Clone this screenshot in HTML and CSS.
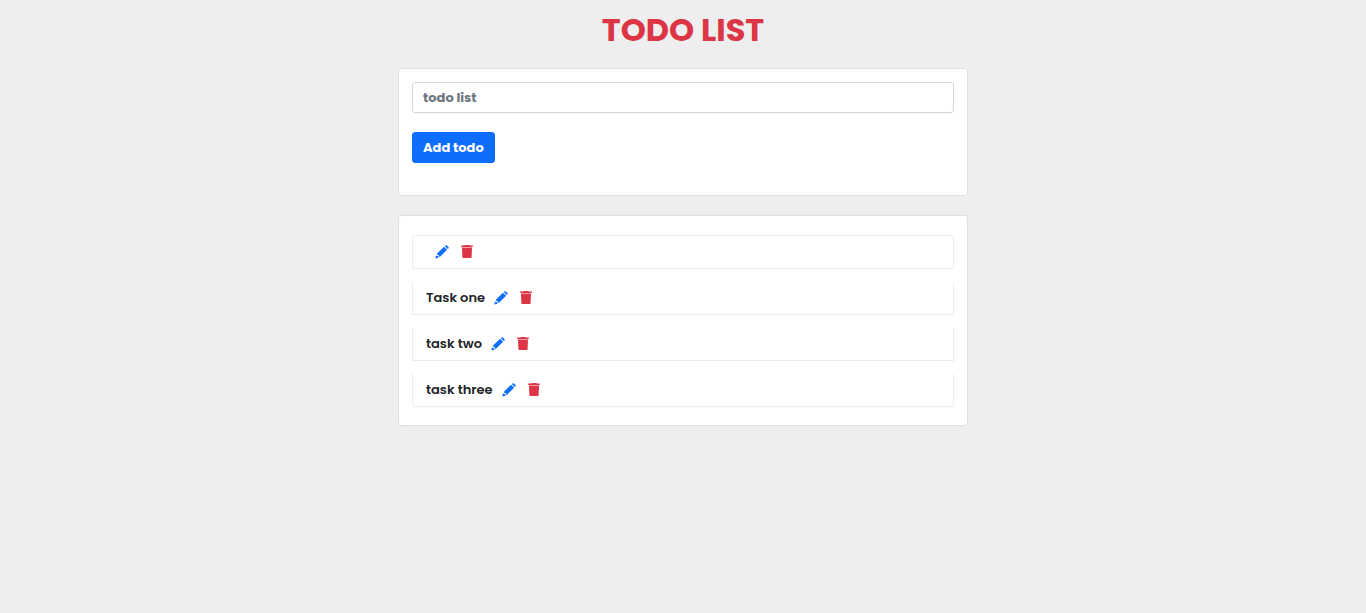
FILE: index.html
```html
<!DOCTYPE html>
<html lang="en">
<head>
<meta charset="utf-8">
<meta name="viewport" content="width=device-width, initial-scale=1">
<title>Todo List</title>
<link rel="stylesheet" href="styles.css">
</head>
<body>
<svg class="sprite" aria-hidden="true">
  <symbol id="pencil" viewBox="0 0 14 14">
    <path d="M9.700 1.100 10.500 .4Q11.200 -.1 11.900 .5L13.400 2Q14 2.700 13.400 3.400L12.700 4.100zM9 1.700 12.100 4.800 5 11.800 4 11.800 3.900 10.200 2.200 10.100 2.100 8.600zM1.300 9.400 1.500 10.900 3.200 11.100 3.300 12.600 4.400 12.400 .3 13.400z"/>
  </symbol>
  <symbol id="trash" viewBox="0 0 14 14">
    <path d="M4.800 0H9.200L9.800 .6H12.800V2H1.200V.6H4.200zM2 2.400H12L11.600 12.200Q11.500 13 10.800 13H3.200Q2.500 13 2.400 12.200z"/>
  </symbol>
</svg>
<main class="container">
  <h1 class="title">TODO LIST</h1>
  <form class="card form">
    <input class="field" type="text" placeholder="todo list" aria-label="todo list">
    <button class="submit" type="button">Add todo</button>
  </form>
  <section class="card tasks">
    <ul class="list">
      <li class="item"><span class="name"></span><button class="icon edit" type="button" aria-label="Edit"><svg><use href="#pencil"/></svg></button><button class="icon delete" type="button" aria-label="Delete"><svg><use href="#trash"/></svg></button></li>
      <li class="item"><span class="name">Task one</span><button class="icon edit" type="button" aria-label="Edit Task one"><svg><use href="#pencil"/></svg></button><button class="icon delete" type="button" aria-label="Delete Task one"><svg><use href="#trash"/></svg></button></li>
      <li class="item"><span class="name">task two</span><button class="icon edit" type="button" aria-label="Edit task two"><svg><use href="#pencil"/></svg></button><button class="icon delete" type="button" aria-label="Delete task two"><svg><use href="#trash"/></svg></button></li>
      <li class="item"><span class="name">task three</span><button class="icon edit" type="button" aria-label="Edit task three"><svg><use href="#pencil"/></svg></button><button class="icon delete" type="button" aria-label="Delete task three"><svg><use href="#trash"/></svg></button></li>
    </ul>
  </section>
</main>
</body>
</html>
```
FILE: styles.css
```css
* {
  box-sizing: border-box;
}

body {
  margin: 0;
  background: #eee;
  color: #212529;
  font: 600 13px/20px Poppins, Inter, sans-serif;
}

.sprite {
  display: none;
}

.container {
  max-width: 570px;
  margin: 0 auto;
  padding: 10px 0;
}

.title {
  margin: 0 0 18px;
  color: #dc3545;
  font-size: 32px;
  font-weight: 700;
  line-height: 40px;
  text-align: center;
}

.card {
  margin-bottom: 19px;
  padding: 13px;
  background: #fff;
  border: 1px solid #dfdfdf;
  border-radius: 3px;
}

.form {
  display: flex;
  flex-direction: column;
  align-items: flex-start;
  gap: 19px;
  padding-bottom: 32px;
}

.field,
.submit {
  height: 31px;
  padding: 0 10px;
  border: 1px solid #ced4da;
  border-radius: 3px;
  font: inherit;
  font-weight: 700;
}

.field {
  width: 100%;
  color: #212529;
}

.field::placeholder {
  color: #6c757d;
  opacity: 1;
}

.submit {
  border-color: #0d6efd;
  background: #0d6efd;
  color: #fff;
}

.tasks {
  padding: 19px 13px 18px;
}

.list {
  display: flex;
  flex-direction: column;
  gap: 13px;
  margin: 0;
  padding: 0;
  list-style: none;
}

.item {
  display: flex;
  align-items: center;
  padding: 6px 13px;
  border: 1px solid #ededed;
  border-top: 0;
}

.item:first-child {
  border-top: 1px solid #ededed;
  border-radius: 3px 3px 0 0;
}

.item:last-child {
  border-radius: 0 0 3px 3px;
}

.name {
  min-height: 20px;
}

.icon {
  display: flex;
  margin-left: 9px;
  padding: 0;
  border: 0;
  background: none;
}

.icon svg {
  width: 14px;
  height: 14px;
  fill: currentColor;
}

.edit {
  color: #0d6efd;
}

.delete {
  margin-left: 11px;
  color: #dc3545;
}
```
